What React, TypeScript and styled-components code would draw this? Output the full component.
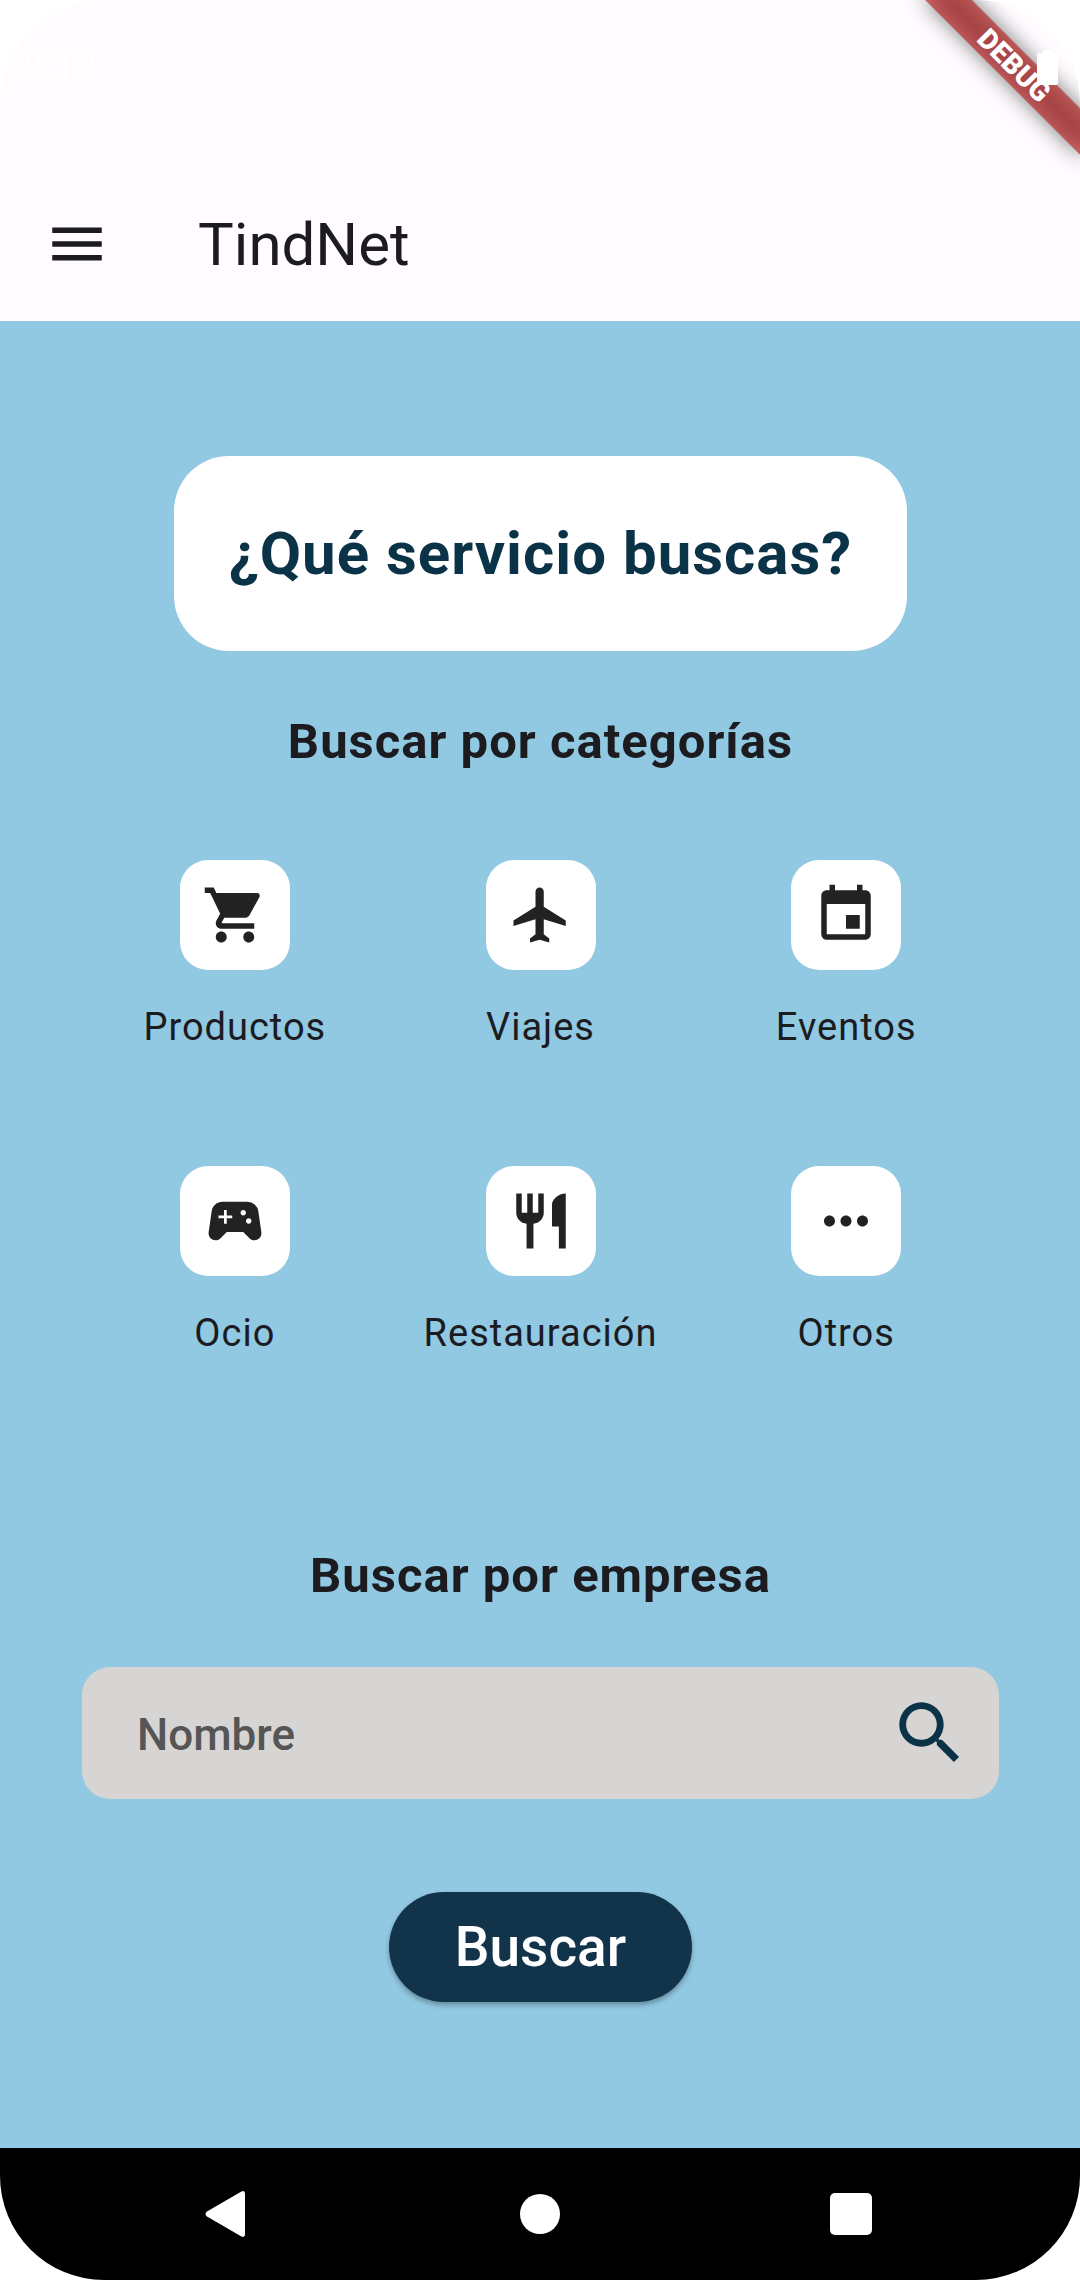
import React, { useState } from 'react';
import styled, { createGlobalStyle } from 'styled-components';
import type { IconType } from 'react-icons';
import {
  MdEvent,
  MdFlight,
  MdMenu,
  MdMoreHoriz,
  MdRestaurant,
  MdSearch,
  MdShoppingCart,
  MdSportsEsports,
} from 'react-icons/md';

const color = {
  surface: '#fffbff',
  page: '#91c8e2',
  ink: '#1c1b1f',
  navy: '#0b3347',
  button: '#11344a',
  icon: '#222222',
  field: '#d7d5d3',
  hint: '#555555',
};

const GlobalStyle = createGlobalStyle`
  *, *::before, *::after { box-sizing: border-box; }
  body {
    margin: 0;
    background: #fff;
    color: ${color.ink};
    font-family: Roboto, "Noto Sans", sans-serif;
  }
  button, input { font: inherit; color: inherit; }
`;

const Screen = styled.div`
  position: relative;
  display: flex;
  flex-direction: column;
  min-height: 100vh;
  overflow: hidden;
  border-radius: 104px;
`;

const StatusBar = styled.div`
  display: flex;
  align-items: center;
  justify-content: space-between;
  height: 167px;
  padding: 0 22px 32px;
  background: ${color.surface};
  color: #fff;
  font-size: 39px;
  line-height: 55px;
`;

const Raised = styled.span`
  position: relative;
  z-index: 2;
  display: flex;
`;

const Ribbon = styled.div`
  position: absolute;
  z-index: 1;
  top: 49px;
  right: -44px;
  width: 220px;
  height: 33px;
  transform: rotate(45deg);
  color: #fff;
  font-size: 28px;
  font-weight: 900;
  line-height: 33px;
  text-align: center;

  &::before {
    content: '';
    position: absolute;
    inset: 0;
    background: rgba(0, 0, 0, 0.5);
    filter: blur(11px);
  }
`;

const RibbonText = styled.span`
  position: relative;
  display: block;
  background: rgba(183, 28, 28, 0.63);
`;

const AppBar = styled.header`
  display: flex;
  align-items: center;
  gap: 44px;
  height: 154px;
  background: ${color.surface};
`;

const IconButton = styled.button<{ $size: number }>`
  display: flex;
  flex: none;
  align-items: center;
  justify-content: center;
  width: ${(p) => p.$size}px;
  height: ${(p) => p.$size}px;
  padding: 0;
  border: 0;
  background: none;
  cursor: pointer;
`;

const AppTitle = styled.h1`
  margin: 0;
  font-size: 60px;
  font-weight: 400;
  line-height: 77px;
`;

const Main = styled.main`
  display: flex;
  flex: 1;
  flex-direction: column;
  align-items: center;
  padding: 135px 81px 135px 82px;
  background: ${color.page};
`;

const Card = styled.h2`
  margin: 0;
  padding: 55px;
  border-radius: 55px;
  background: #fff;
  color: ${color.navy};
  font-size: 60px;
  font-weight: 700;
  letter-spacing: 1px;
  line-height: 85px;
`;

const SectionTitle = styled.h3<{ $top: number }>`
  margin: ${(p) => p.$top}px 0 0;
  font-size: 49px;
  font-weight: 700;
  letter-spacing: 1px;
  line-height: 72px;
`;

const Grid = styled.div`
  display: grid;
  grid-template-columns: repeat(3, 1fr);
  width: 100%;
  margin-top: 27px;
`;

const Category = styled.button`
  display: flex;
  flex-direction: column;
  align-items: center;
  justify-content: center;
  gap: 30px;
  aspect-ratio: 1;
  padding: 0;
  border: 0;
  background: none;
  font-size: 38px;
  letter-spacing: 1px;
  line-height: 55px;
  cursor: pointer;
`;

const Tile = styled.span`
  display: flex;
  align-items: center;
  justify-content: center;
  width: 110px;
  height: 110px;
  border-radius: 28px;
  background: #fff;
  color: ${color.icon};
`;

const SearchForm = styled.form`
  display: flex;
  flex-direction: column;
  align-items: center;
  gap: 93px;
  width: 100%;
  margin-top: 55px;
`;

const Field = styled.div`
  display: flex;
  align-items: center;
  width: 100%;
  height: 132px;
  padding: 0 28px 0 55px;
  border-radius: 28px;
  background: ${color.field};
  color: ${color.navy};
`;

const FieldInput = styled.input`
  flex: 1;
  min-width: 0;
  padding: 4px 0 0;
  border: 0;
  outline: 0;
  background: none;
  font-size: 44px;
  font-weight: 500;
  line-height: 66px;

  &::placeholder {
    color: ${color.hint};
    opacity: 1;
  }
`;

const SubmitButton = styled.button`
  height: 110px;
  padding: 0 66px;
  border: 0;
  border-radius: 55px;
  background: ${color.button};
  box-shadow: 0 3px 5px rgba(0, 0, 0, 0.3);
  color: #fff;
  font-size: 55px;
  font-weight: 500;
  line-height: 77px;
  cursor: pointer;
`;

const SystemNav = styled.nav`
  display: grid;
  grid-template-columns: repeat(3, 1fr);
  justify-items: center;
  align-items: center;
  height: 132px;
  padding: 0 70px;
  background: #000;
`;

const categories: { name: string; Icon: IconType }[] = [
  { name: 'Productos', Icon: MdShoppingCart },
  { name: 'Viajes', Icon: MdFlight },
  { name: 'Eventos', Icon: MdEvent },
  { name: 'Ocio', Icon: MdSportsEsports },
  { name: 'Restauración', Icon: MdRestaurant },
  { name: 'Otros', Icon: MdMoreHoriz },
];

export default function App() {
  const [name, setName] = useState('');

  return (
    <>
      <GlobalStyle />
      <Screen>
        <StatusBar>
          <Raised>8:13</Raised>
          <Raised>
            <svg width="21" height="35" viewBox="0 0 21 35" fill="#fff" aria-hidden="true">
              <path d="M6 0h9v3h4q2 0 2 2v28q0 2-2 2H2q-2 0-2-2V5q0-2 2-2h4z" />
            </svg>
          </Raised>
          <Ribbon>
            <RibbonText>DEBUG</RibbonText>
          </Ribbon>
        </StatusBar>

        <AppBar>
          <IconButton type="button" $size={154} aria-label="Abrir menú">
            <MdMenu size={66} />
          </IconButton>
          <AppTitle>TindNet</AppTitle>
        </AppBar>

        <Main>
          <Card>¿Qué servicio buscas?</Card>

          <SectionTitle $top={55}>Buscar por categorías</SectionTitle>
          <Grid>
            {categories.map(({ name: label, Icon }) => (
              <Category key={label} type="button">
                <Tile>
                  <Icon size={66} />
                </Tile>
                {label}
              </Category>
            ))}
          </Grid>

          <SectionTitle $top={124}>Buscar por empresa</SectionTitle>
          <SearchForm onSubmit={(e: React.FormEvent) => e.preventDefault()}>
            <Field>
              <FieldInput
                type="text"
                aria-label="Nombre"
                placeholder="Nombre"
                value={name}
                onChange={(e: React.ChangeEvent<HTMLInputElement>) => setName(e.target.value)}
              />
              <IconButton type="submit" $size={82} aria-label="Buscar empresa">
                <MdSearch size={82} />
              </IconButton>
            </Field>
            <SubmitButton type="submit">Buscar</SubmitButton>
          </SearchForm>
        </Main>

        <SystemNav aria-label="Sistema">
          <IconButton type="button" $size={88} aria-label="Atrás">
            <svg width="44" height="46" viewBox="0 0 44 46" fill="#fff" aria-hidden="true">
              <path d="M2 20.500 36 .7q4-2 4 2v40.600q0 4-4 2L2 25.500q-3-2.500 0-5z" />
            </svg>
          </IconButton>
          <IconButton type="button" $size={88} aria-label="Inicio">
            <svg width="42" height="42" viewBox="0 0 42 42" fill="#fff" aria-hidden="true">
              <circle cx="21" cy="21" r="20" />
            </svg>
          </IconButton>
          <IconButton type="button" $size={88} aria-label="Recientes">
            <svg width="46" height="42" viewBox="0 0 46 42" fill="#fff" aria-hidden="true">
              <rect width="42" height="42" rx="5" />
            </svg>
          </IconButton>
        </SystemNav>
      </Screen>
    </>
  );
}
